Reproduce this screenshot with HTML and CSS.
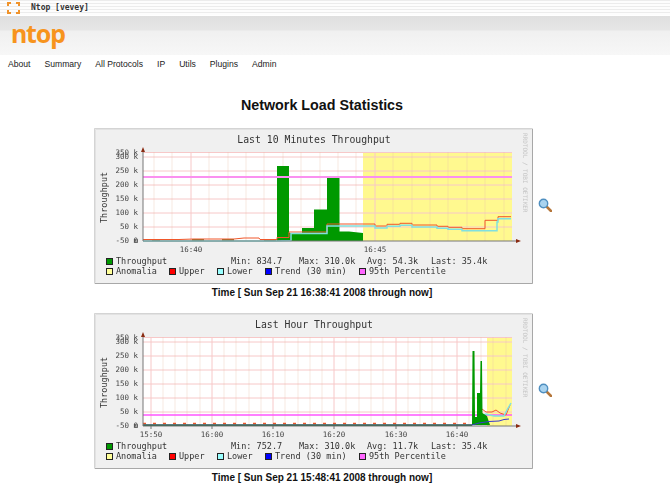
FILE: index.html

```html
<!DOCTYPE html>
<html lang="en">
<head>
    <meta charset="UTF-8">
    <meta name="viewport" content="width=device-width, initial-scale=1.0">
    <title>Ntop [vevey]</title>
    <link rel="stylesheet" href="styles.css">
</head>
<body>
    <div class="titlebar">
        <svg class="titlebar-icon" width="13" height="12" viewBox="0 0 13 12">
            <path d="M1 4V1H4M9 1H12V4M12 8V11H9M4 11H1V8" fill="none" stroke="#f0932b" stroke-width="2"/>
        </svg>
        <span class="titlebar-text">Ntop [vevey]</span>
    </div>
    <div class="logo-band">
        <span class="logo">ntop</span>
    </div>
    <nav class="menu">
        <a>About</a>
        <a>Summary</a>
        <a>All Protocols</a>
        <a>IP</a>
        <a>Utils</a>
        <a>Plugins</a>
        <a>Admin</a>
    </nav>

    <main class="content">
        <h1>Network Load Statistics</h1>

        <!-- parts both graphs share -->
        <svg class="defs" width="0" height="0">
            <defs>
                <g id="frame">
                    <path d="M0.5 155.5V0.5H438.5" fill="none" stroke="#d4d4d4"/>
                    <path d="M1 155.5H438.5V1" fill="none" stroke="#a8a8a8"/>
                    <path d="M1.5 154.5V1.5H437.5" fill="none" stroke="#e2e2e2"/>
                </g>
                <g id="hgrid">
                    <path class="grid-major" d="M49 24.5H418M49 29H418M49 43H418M49 57H418M49 71H418M49 85H418M49 99H418"/>
                </g>
                <g id="axes">
                    <path class="axis" d="M49 113H423M49 113V22"/>
                    <path class="arrow" d="M47 24L49 19L51 24ZM422 111L427 113L422 115Z"/>
                    <text class="tick" x="44" y="27">350 k</text>
                    <text class="tick" x="44" y="31">300 k</text>
                    <text class="tick" x="44" y="45">250 k</text>
                    <text class="tick" x="44" y="59">200 k</text>
                    <text class="tick" x="44" y="73">150 k</text>
                    <text class="tick" x="44" y="87">100 k</text>
                    <text class="tick" x="44" y="101">50 k</text>
                    <text class="tick" x="44" y="115">-50 m</text>
                    <text class="tick" x="44" y="115">0</text>
                    <text class="legend" transform="translate(13 95) rotate(-90)">Throughput</text>
                    <text class="credit" transform="translate(429 5) rotate(90)">RRDTOOL / TOBI OETIKER</text>
                </g>
                <g id="legend">
                    <rect class="swatch" x="12.5" y="130.5" width="6" height="6" fill="#009900"/>
                    <text class="legend" x="22" y="136">Throughput</text>
                    <rect class="swatch" x="12.5" y="140.5" width="6" height="6" fill="#ffff99"/>
                    <text class="legend" x="22" y="146">Anomalia</text>
                    <rect class="swatch" x="75.5" y="140.5" width="6" height="6" fill="#ff0000"/>
                    <text class="legend" x="85" y="146">Upper</text>
                    <rect class="swatch" x="123.5" y="140.5" width="6" height="6" fill="#99ffff"/>
                    <text class="legend" x="133" y="146">Lower</text>
                    <rect class="swatch" x="171.5" y="140.5" width="6" height="6" fill="#0000ff"/>
                    <text class="legend" x="181" y="146">Trend (30 min)</text>
                    <rect class="swatch" x="265.5" y="140.5" width="6" height="6" fill="#ff66ff"/>
                    <text class="legend" x="275" y="146">95th Percentile</text>
                </g>
                <g id="zoom-icon">
                    <path d="M8 8L13 13" stroke="#b5763a" stroke-width="2.5" stroke-linecap="round"/>
                    <circle cx="5.500" cy="5.500" r="4.200" fill="#a9d3ef" stroke="#4f8fc0" stroke-width="1.400"/>
                </g>
            </defs>
        </svg>

        <div class="graph-row">
            <svg class="graph" width="439" height="156" viewBox="0 0 439 156">
                <use href="#frame"/>
                <text class="graph-title" x="220" y="15">Last 10 Minutes Throughput</text>
                <rect x="49" y="24" width="369" height="89" fill="#ffffff"/>
                <rect x="269" y="24" width="149" height="89" fill="#fff98f"/>
                <use href="#hgrid"/>
                <path class="grid-minor" d="M60 24V113M78 24V113M115 24V113M134 24V113M152 24V113M170 24V113M189 24V113M207 24V113M226 24V113M244 24V113M262 24V113M299 24V113M318 24V113M336 24V113M354 24V113M373 24V113M391 24V113M410 24V113"/>
                <path class="grid-major" d="M97 24V113M281 24V113"/>
                <path fill="#009900" d="M183 38H195V113H183ZM195 105H208V100H220V81.500H233V49H245.500V103.500H255L269 105V113H195Z"/>
                <path class="base-green" d="M58 111H66V113H58ZM98 111H110V113H98ZM128 111H140V113H128ZM170 111H182V113H170Z"/>
                <path class="upper" d="M49 111.500H85L100 111H140L150 110H165L166 111.500H183V109.500H195V104H233V96H281V98H293V96.300H306V95.300H318V97H343V98.300H354V99.300H368V100.700H391V92.300H404V88.700H417"/>
                <path class="lower" d="M49 113H180L197 112.500V105.500H233V98H281V100H293V98.300H306V97.300H318V99H343V100.300H354V101.300H368V102.700H403V94H404V90.700H417"/>
                <path class="percentile" d="M49 49H418"/>
                <use href="#axes"/>
                <text class="tick tick-x" x="97" y="124">16:40</text>
                <text class="tick tick-x" x="281" y="124">16:45</text>
                <use href="#legend"/>
                <text class="legend" x="137" y="136">Min: 834.7</text>
                <text class="legend" x="205" y="136">Max: 310.0k</text>
                <text class="legend" x="273" y="136">Avg: 54.3k</text>
                <text class="legend" x="337" y="136">Last: 35.4k</text>
            </svg>
            <svg class="zoom" width="14" height="14" viewBox="0 0 14 14"><use href="#zoom-icon"/></svg>
        </div>
        <p class="caption">Time [ Sun Sep 21 16:38:41 2008 through now]</p>

        <div class="graph-row">
            <svg class="graph" width="439" height="156" viewBox="0 0 439 156">
                <use href="#frame"/>
                <text class="graph-title" x="220" y="15">Last Hour Throughput</text>
                <rect x="49" y="24" width="369" height="89" fill="#ffffff"/>
                <rect x="393" y="24" width="25" height="89" fill="#fff98f"/>
                <use href="#hgrid"/>
                <path class="grid-minor" d="M69 24V113M81 24V113M93 24V113M106 24V113M130 24V113M142 24V113M155 24V113M167 24V113M191 24V113M204 24V113M216 24V113M228 24V113M252 24V113M265 24V113M277 24V113M289 24V113M314 24V113M326 24V113M338 24V113M350 24V113M375 24V113M387 24V113M399 24V113M412 24V113"/>
                <path class="grid-major" d="M57 24V113M118 24V113M179 24V113M240 24V113M302 24V113M363 24V113"/>
                <path class="percentile-thin" d="M49 102H418"/>
                <path class="upper noise" d="M49 110.500H378"/>
                <path class="upper" d="M380 112L384 104L388 96L392 99H398L402 97L406 100L412 102L416 92"/>
                <path class="lower" d="M380 112L386 103L392 101L400 103L410 103L413 97L417 90"/>
                <path fill="#009900" d="M378 112L378.500 38H380.500L381 104H383V80H386L386.500 48H388L388.500 100L393 103L396 112ZM49 111.500H378V113H49Z"/>
                <path class="trend-base" d="M49 112H378"/>
                <path class="trend" d="M378 112L385 110L395 108.500L405 108L410 106.500L415 106"/>
                <use href="#axes"/>
                <path class="axis" d="M57 113V116M118 113V116M179 113V116M240 113V116M302 113V116M363 113V116"/>
                <text class="tick tick-x" x="57" y="124">15:50</text>
                <text class="tick tick-x" x="118" y="124">16:00</text>
                <text class="tick tick-x" x="179" y="124">16:10</text>
                <text class="tick tick-x" x="240" y="124">16:20</text>
                <text class="tick tick-x" x="302" y="124">16:30</text>
                <text class="tick tick-x" x="363" y="124">16:40</text>
                <use href="#legend"/>
                <text class="legend" x="137" y="136">Min: 752.7</text>
                <text class="legend" x="205" y="136">Max: 310.0k</text>
                <text class="legend" x="273" y="136">Avg: 11.7k</text>
                <text class="legend" x="337" y="136">Last: 35.4k</text>
            </svg>
            <svg class="zoom" width="14" height="14" viewBox="0 0 14 14"><use href="#zoom-icon"/></svg>
        </div>
        <p class="caption">Time [ Sun Sep 21 15:48:41 2008 through now]</p>
    </main>
</body>
</html>
```

FILE: styles.css

```css
body {
    font-family: "Liberation Sans", Arial, sans-serif;
    margin: 0;
    background-color: #fff;
    color: #000;
    overflow: hidden;
}
.titlebar {
    display: flex;
    align-items: center;
    height: 16px;
    padding-left: 7px;
    box-sizing: border-box;
    background: repeating-linear-gradient(#ececec 0, #ececec 1px, #fdfdfd 1px, #fdfdfd 3px);
    border-bottom: 1px solid #fff;
}
.titlebar-text {
    font-family: "DejaVu Sans Mono", monospace;
    font-size: 8px;
    font-weight: bold;
    color: #333;
    margin-left: 11px;
}
.logo-band {
    height: 39px;
    padding-left: 11px;
    box-sizing: border-box;
    background: linear-gradient(#dfdfdf 0, #e6e6e6 14px, #f0f0f0 15px, #f7f7f7 100%);
}
.logo {
    display: block;
    font-family: "Noto Sans", sans-serif;
    font-size: 25px;
    font-weight: bold;
    line-height: 35px;
    letter-spacing: -1.2px;
    color: #f7941d;
}
.menu {
    display: flex;
    gap: 14px;
    height: 18px;
    padding-left: 8px;
    align-items: center;
    font-family: "Liberation Sans", sans-serif;
    font-size: 8.6px;
    color: #222;
}
.content {
    width: 644px;
    text-align: center;
}
h1 {
    font-size: 14.3px;
    line-height: 18px;
    margin: 23px 0 14px;
    color: #111;
}
.defs {
    position: absolute;
}
.graph-row {
    display: flex;
    align-items: center;
    gap: 5px;
    padding-left: 94px;
}
.graph {
    display: block;
    background: #f0f0f0;
    filter: blur(0.3px);
}
.zoom {
    margin-top: -2px;
}
.caption {
    font-size: 10px;
    font-weight: bold;
    line-height: 14px;
    margin: 2px 0 13px;
    color: #111;
}
.graph-title {
    font-family: "DejaVu Sans Mono", monospace;
    font-size: 9.8px;
    text-anchor: middle;
    fill: #333;
}
.legend {
    font-family: "DejaVu Sans Mono", monospace;
    font-size: 8.5px;
    fill: #333;
}
.tick {
    font-family: "DejaVu Sans Mono", monospace;
    font-size: 7.5px;
    text-anchor: end;
    fill: #444;
}
.tick-x {
    text-anchor: middle;
}
.credit {
    font-family: "DejaVu Sans Mono", monospace;
    font-size: 6px;
    fill: #c4c4c4;
}
.swatch {
    stroke: #222;
    stroke-width: 1;
}
.axis {
    fill: none;
    stroke: #777;
    stroke-width: 1;
}
.arrow {
    fill: #8a2b12;
}
.grid-major {
    fill: none;
    stroke: #f7c8c8;
    stroke-width: 1;
}
.grid-minor {
    fill: none;
    stroke: rgba(230, 190, 170, 0.35);
    stroke-width: 1;
}
.upper {
    fill: none;
    stroke: #f0572a;
    stroke-width: 1;
}
.noise {
    stroke-width: 1.5;
    stroke-dasharray: 3 7;
}
.lower {
    fill: none;
    stroke: #80e0e0;
    stroke-width: 1.5;
}
.trend {
    fill: none;
    stroke: #3a3ad0;
    stroke-width: 1;
}
.trend-base {
    fill: none;
    stroke: #3a2a80;
    stroke-width: 1;
}
.base-green {
    fill: #7a7a30;
}
.percentile {
    fill: none;
    stroke: #fa90f0;
    stroke-width: 2;
}
.percentile-thin {
    fill: none;
    stroke: #ff55ff;
    stroke-width: 1.5;
}
```
